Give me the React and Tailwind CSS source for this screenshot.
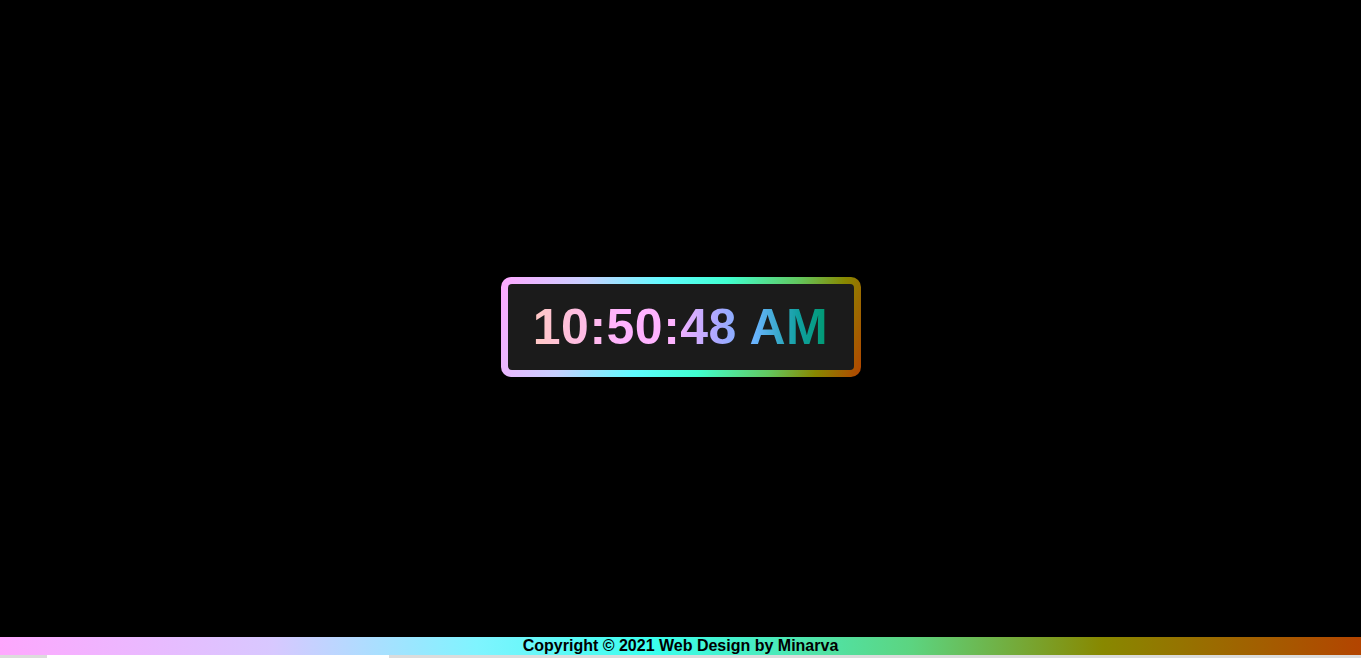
import React from 'react';

// Rainbow clock card with gradient footer
export default function App() {
  return (
    <div className="h-screen w-full bg-black flex flex-col overflow-hidden font-['Liberation_Sans',Arial,sans-serif]">
      <main className="flex-1 flex items-center justify-center pt-[17px]">
        <div className="w-[360px] h-[100px] rounded-[10px] p-[7px] bg-[linear-gradient(108deg,#ffa8ff_0%,#c8d0ff_22%,#5ffcff_42%,#40ffd0_58%,#62c860_76%,#888800_88%,#b34400_100%)]">
          <div className="w-full h-full rounded-[4px] bg-[#1b1b1b] flex items-center justify-center">
            <span className="text-[50px] leading-none font-bold tracking-[0.5px] bg-[linear-gradient(to_right,#ffc8c4_0%,#ffb3ff_30%,#ffb3ff_47%,#a8a8ff_63%,#6ab4ff_75%,#10a0a0_90%,#009970_100%)] bg-clip-text text-transparent">
              10:50:48 AM
            </span>
          </div>
        </div>
      </main>
      <footer className="h-[18px] flex items-center justify-center bg-[linear-gradient(to_right,#ffa8ff_0%,#d8c8ff_20%,#a8e0ff_28%,#7ff4ff_35%,#3affee_48%,#5cd480_67%,#888800_81%,#b34400_100%)]">
        <p className="text-[16px] leading-[18px] font-bold text-black">Copyright © 2021 Web Design by Minarva</p>
      </footer>
      <div className="h-[3px] bg-[#dcdcdc] flex">
        <div className="ml-[47px] w-[342px] bg-white" />
      </div>
    </div>
  );
}
